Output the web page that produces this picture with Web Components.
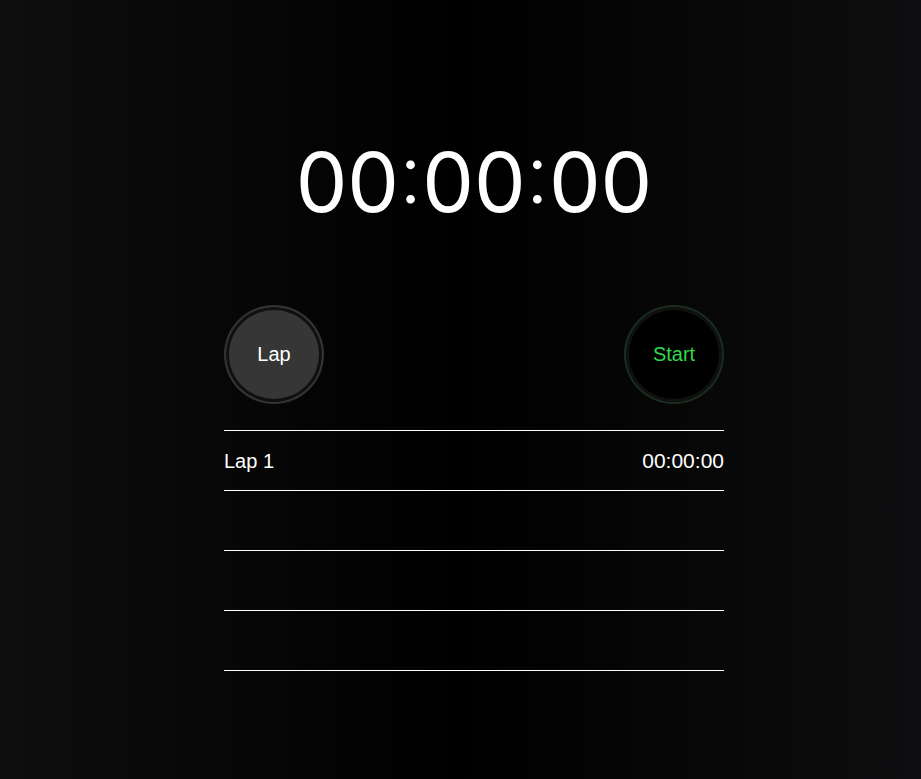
<!DOCTYPE html>
<html lang="en">
<head>
<meta charset="utf-8">
<title>Stopwatch</title>
<style>
html, body { margin: 0; min-height: 100%; }
body { font-family: "Liberation Sans", Arial, sans-serif; color: #fff; background: #000; }
</style>
</head>
<body>
<stop-watch></stop-watch>
<script>
class TimeDisplay extends HTMLElement {
  constructor() {
    super();
    this.attachShadow({ mode: "open" }).innerHTML = `
      <style>
        :host { display: block; text-align: center; font: 400 82px/104px Inter, sans-serif; }
        ::slotted(span) { font-weight: 300; font-feature-settings: "case"; }
      </style>
      <slot></slot>`;
  }
}
customElements.define("time-display", TimeDisplay);

class RoundButton extends HTMLElement {
  constructor() {
    super();
    this.attachShadow({ mode: "open" }).innerHTML = `
      <style>
        :host { display: block; }
        button { box-sizing: border-box; display: block; width: 100px; height: 99px; padding: 0; border-radius: 50%;
          border: 2px solid #333; background: #363636; box-shadow: inset 0 0 0 3px #101010;
          color: #fff; font: 20px "Liberation Sans", Arial, sans-serif; cursor: pointer; }
        :host([kind="start"]) button { background: #000; border-color: #1a2e1f; color: #32d74b; }
      </style>
      <button type="button"><slot></slot></button>`;
  }
}
customElements.define("round-button", RoundButton);

class LapRow extends HTMLElement {
  constructor() {
    super();
    this.attachShadow({ mode: "open" }).innerHTML = `
      <style>
        :host { display: flex; box-sizing: border-box; height: 60px; align-items: center;
          justify-content: space-between; border-bottom: 1px solid #fff; font-size: 20px; line-height: 24px; }
        ::slotted([slot="time"]) { font-size: 21px; }
      </style>
      <slot></slot><slot name="time"></slot>`;
  }
}
customElements.define("lap-row", LapRow);

class StopWatch extends HTMLElement {
  constructor() {
    super();
    this.attachShadow({ mode: "open" }).innerHTML = `
      <style>
        :host { display: block; box-sizing: border-box; min-height: 100vh; padding: 131px 0 40px 27px;
          background: linear-gradient(90deg, #0e0e0e, #000 50%, #0e0e10); }
        main { width: 100%; max-width: 500px; margin: 0 auto; }
        .actions { display: flex; justify-content: space-between; margin: 70px 0 26px; }
        .laps { border-top: 1px solid #fff; }
      </style>
      <main>
        <time-display>00<span>:</span>00<span>:</span>00</time-display>
        <div class="actions">
          <round-button kind="lap">Lap</round-button>
          <round-button kind="start">Start</round-button>
        </div>
        <div class="laps">
          <lap-row>Lap 1<span slot="time">00:00:00</span></lap-row>
          <lap-row></lap-row><lap-row></lap-row><lap-row></lap-row>
        </div>
      </main>`;
  }
}
customElements.define("stop-watch", StopWatch);
</script>
</body>
</html>
